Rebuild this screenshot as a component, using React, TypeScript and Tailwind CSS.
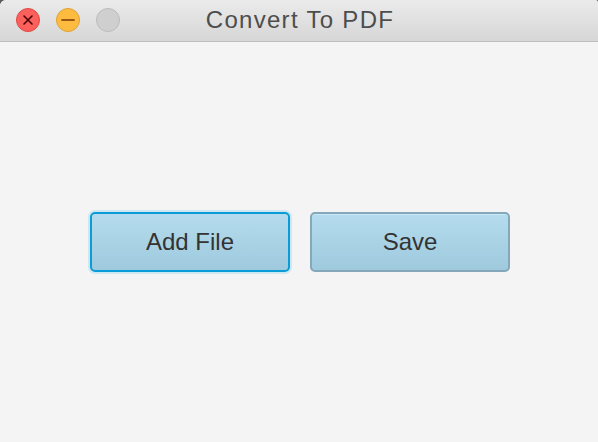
export default function App() {
  return (
    <div className="w-[598px] h-[442px] bg-[#5a5a5a]" style={{ fontFamily: '"Liberation Sans", Arial, sans-serif' }}>
      <div className="w-full h-full flex flex-col bg-[#f4f4f4] rounded-tl-[6px] rounded-tr-[3px] overflow-hidden">
        {/* Title bar */}
        <div className="h-[42px] grid grid-cols-[1fr_auto_1fr] items-center bg-gradient-to-b from-[#ebebeb] to-[#d6d6d6] border-b border-[#bdbdbd]">
          <div className="flex items-center gap-4 pl-4 -mt-[2px]">
            <span className="w-6 h-6 rounded-full bg-[#fc605c] border border-[#de4a45] flex items-center justify-center">
              <svg width="12" height="12" viewBox="0 0 12 12">
                <path d="M2 2 L10 10 M10 2 L2 10" stroke="#4a0002" strokeWidth="1.6" strokeLinecap="round" />
              </svg>
            </span>
            <span className="w-6 h-6 rounded-full bg-[#fdbc40] border border-[#dea236] flex items-center justify-center">
              <svg width="14" height="4" viewBox="0 0 14 4">
                <path d="M1 2 L13 2" stroke="#985712" strokeWidth="1.8" strokeLinecap="round" />
              </svg>
            </span>
            <span className="w-6 h-6 rounded-full bg-[#cfcfcf] border border-[#bcbcbc]" />
          </div>
          <div className="text-[24px] tracking-[1.3px] text-[#4d4d4d] -mt-[1px] pl-[2px]">Convert To PDF</div>
          <div />
        </div>

        {/* Body */}
        <div className="flex-1 flex items-center justify-center gap-5 pl-[2px]">
          <button className="w-[200px] h-[60px] rounded-[5px] border-2 border-[#0a9cd6] shadow-[0_0_0_2px_#cde8f3] bg-gradient-to-b from-[#b4dcee] to-[#9fc9dd] text-[24px] text-[#333333]">
            Add File
          </button>
          <button className="w-[200px] h-[60px] rounded-[5px] border-2 border-[#84a7ba] bg-gradient-to-b from-[#b4dcee] to-[#9fc9dd] shadow-[inset_0_1px_0_#c9e8f5] text-[24px] text-[#333333]">
            Save
          </button>
        </div>
      </div>
    </div>
  )
}
